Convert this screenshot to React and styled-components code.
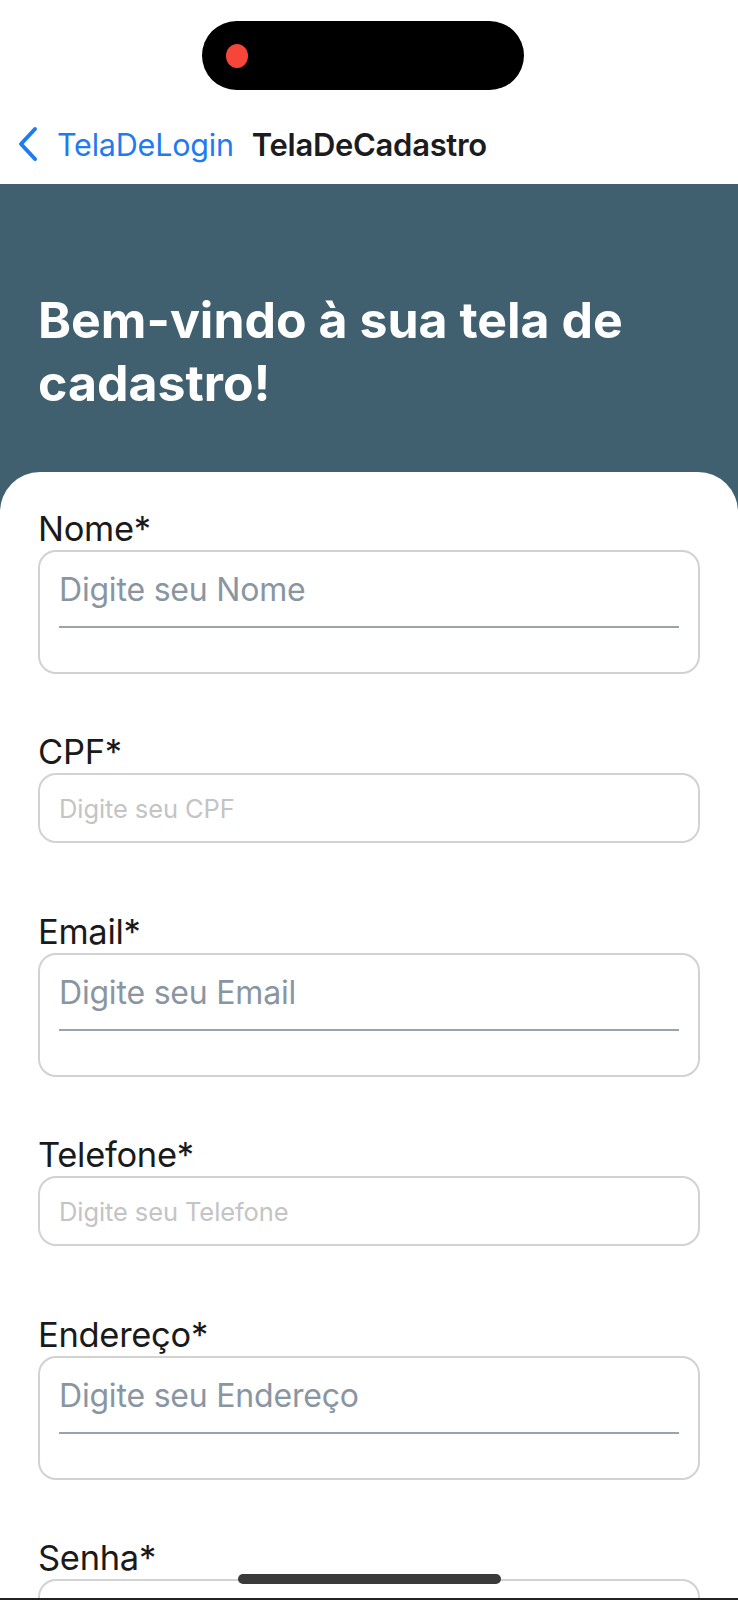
import React from "react";
import styled, { createGlobalStyle } from "styled-components";

const GlobalStyle = createGlobalStyle`
  * { box-sizing: border-box; }
  body {
    margin: 0;
    background: #ffffff;
    font-family: Inter, "Noto Sans", "Liberation Sans", sans-serif;
  }
`;

const fields = [
  { label: "Nome", placeholder: "Digite seu Nome", tall: true },
  { label: "CPF", placeholder: "Digite seu CPF" },
  { label: "Email", placeholder: "Digite seu Email", tall: true },
  { label: "Telefone", placeholder: "Digite seu Telefone" },
  { label: "Endereço", placeholder: "Digite seu Endereço", tall: true },
  { label: "Senha", placeholder: "", tall: true },
];

function ChevronLeft() {
  return (
    <svg width="22" height="36" viewBox="0 0 22 36" fill="none">
      <path
        d="M18 3 L4 18 L18 33"
        stroke="#1f7bf0"
        strokeWidth="4"
        strokeLinecap="round"
        strokeLinejoin="round"
      />
    </svg>
  );
}

export default function App() {
  return (
    <Screen>
      <GlobalStyle />
      <StatusBar>
        <Island>
          <RecDot />
        </Island>
      </StatusBar>
      <NavBar>
        <BackButton>
          <ChevronLeft />
          <BackText>TelaDeLogin</BackText>
        </BackButton>
        <NavTitle>TelaDeCadastro</NavTitle>
      </NavBar>
      <Header>
        <Title>Bem-vindo à sua tela de cadastro!</Title>
      </Header>
      <Card>
        {fields.map((f) => (
          <Field key={f.label} $tall={f.tall}>
            <Label>{f.label}*</Label>
            <InputBox $tall={f.tall}>
              {f.tall ? (
                <FlatInput>
                  <BigPlaceholder>{f.placeholder}</BigPlaceholder>
                </FlatInput>
              ) : (
                <SmallPlaceholder>{f.placeholder}</SmallPlaceholder>
              )}
            </InputBox>
          </Field>
        ))}
      </Card>
      <HomeIndicator />
      <BottomEdge />
    </Screen>
  );
}

const Screen = styled.div`
  position: relative;
  width: 738px;
  height: 1600px;
  overflow: hidden;
  background: #ffffff;
`;

const StatusBar = styled.div`
  height: 104px;
  display: flex;
  padding: 21px 0 0 202px;
`;

const Island = styled.div`
  width: 322px;
  height: 69px;
  background: #000;
  border-radius: 35px;
  display: flex;
  align-items: center;
  padding-left: 24px;
`;

const RecDot = styled.div`
  width: 22px;
  height: 24px;
  border-radius: 50%;
  background: #f6463a;
`;

const NavBar = styled.div`
  height: 80px;
  display: flex;
  align-items: center;
  padding-left: 17px;
  gap: 18px;
`;

const BackButton = styled.div`
  display: flex;
  align-items: center;
  gap: 18px;
`;

const BackText = styled.span`
  font-size: 30.5px;
  color: #1f7bf0;
  letter-spacing: -0.2px;
`;

const NavTitle = styled.span`
  font-size: 31px;
  font-weight: 600;
  color: #1c1c1e;
  letter-spacing: -0.3px;
`;

const Header = styled.div`
  background: #40606f;
  height: 330px;
  padding: 105px 38px 0;
`;

const Title = styled.h1`
  margin: 0;
  color: #ffffff;
  font-size: 50px;
  line-height: 63px;
  font-weight: 700;
  letter-spacing: 0;
`;

const Card = styled.div`
  position: relative;
  margin-top: -42px;
  background: #ffffff;
  border-radius: 40px 40px 0 0;
  padding: 36px 38px 0;
  display: flex;
  flex-direction: column;
`;

const Field = styled.div`
  display: flex;
  flex-direction: column;
  height: ${(p) => (p.$tall ? "223px" : "180px")};
`;

const Label = styled.div`
  font-size: 34.5px;
  line-height: 42px;
  color: #1a1a1a;
  letter-spacing: -0.3px;
`;

const InputBox = styled.div`
  height: ${(p) => (p.$tall ? "124px" : "70px")};
  border: 2px solid #d2d2d2;
  border-radius: 18px;
  display: flex;
  flex-direction: column;
  justify-content: ${(p) => (p.$tall ? "flex-start" : "center")};
  padding: 0 19px;
`;

const FlatInput = styled.div`
  height: 76px;
  border-bottom: 2px solid #9aa3ab;
  display: flex;
  align-items: center;
`;

const BigPlaceholder = styled.span`
  font-size: 32px;
  color: #8996a2;
  letter-spacing: -0.2px;
`;

const SmallPlaceholder = styled.span`
  font-size: 25.5px;
  color: #c4c4c4;
  letter-spacing: -0.1px;
`;

const HomeIndicator = styled.div`
  position: absolute;
  left: 238px;
  bottom: 16px;
  width: 263px;
  height: 10px;
  border-radius: 5px;
  background: #3a3a3a;
`;

const BottomEdge = styled.div`
  position: absolute;
  left: 0;
  right: 0;
  bottom: 0;
  height: 2px;
  background: #222;
`;
